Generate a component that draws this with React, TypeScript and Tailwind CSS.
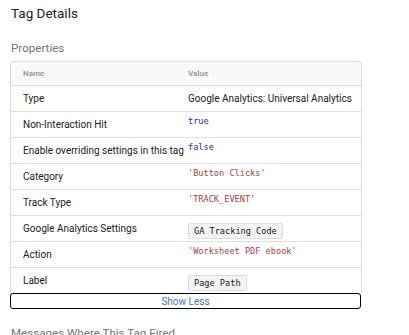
import React from "react";

const mono = "font-['DejaVu_Sans_Mono','Liberation_Mono',monospace]";

type Row = { name: string; kind: "text" | "bool" | "str" | "chip"; value: string };

const rows: Row[] = [
  { name: "Type", kind: "text", value: "Google Analytics: Universal Analytics" },
  { name: "Non-Interaction Hit", kind: "bool", value: "true" },
  { name: "Enable overriding settings in this tag", kind: "bool", value: "false" },
  { name: "Category", kind: "str", value: "'Button Clicks'" },
  { name: "Track Type", kind: "str", value: "'TRACK_EVENT'" },
  { name: "Google Analytics Settings", kind: "chip", value: "GA Tracking Code" },
  { name: "Action", kind: "str", value: "'Worksheet PDF ebook'" },
  { name: "Label", kind: "chip", value: "Page Path" },
];

function Value({ row }: { row: Row }) {
  if (row.kind === "text")
    return <div className="self-center text-[10px] text-[#212121]">{row.value}</div>;
  if (row.kind === "bool")
    return <div className={`${mono} pt-[3px] text-[8.6px] leading-[13px] text-[#2d2d9c]`}>{row.value}</div>;
  if (row.kind === "str")
    return <div className={`${mono} pt-[3px] text-[8.6px] leading-[13px] whitespace-pre text-[#a8403c]`}>{row.value}</div>;
  return (
    <div className="self-center">
      <span className={`${mono} inline-block rounded-[2px] border border-[#dadce0] bg-[#f1f3f4] px-[5px] text-[8.6px] leading-[14px] text-[#212121]`}>
        {row.value}
      </span>
    </div>
  );
}

export default function App() {
  return (
    <div className="w-[409px] h-[335px] overflow-hidden bg-white font-['Roboto','Noto_Sans',sans-serif]">
      <div className="pl-[11px] pt-[3px] text-[13.5px] leading-[20px] text-[#212121]">Tag Details</div>
      <div className="pl-[11px] pt-[17px] text-[11.6px] leading-[16px] text-[#757575]">Properties</div>
      <div className="ml-[10px] mt-[5px] w-[352px]">
        <div className="overflow-hidden rounded-t-[4px] border-x border-t border-[#dadce0]">
          <div className="flex h-[23px] items-center bg-[#f8f9fa] text-[8px] font-bold text-[#9e9e9e]">
            <div className="w-[177px] pl-[12px]">Name</div>
            <div>Value</div>
          </div>
          {rows.map((r) => (
            <div key={r.name} className="flex h-[26px] border-t border-[#e0e0e0]">
              <div className="w-[177px] shrink-0 self-center whitespace-nowrap pl-[12px] text-[10px] text-[#212121]">
                {r.name}
              </div>
              <Value row={r} />
            </div>
          ))}
        </div>
        <button className="flex h-[16px] w-[351px] items-center justify-center rounded-[3px] border-[1.5px] border-black bg-white text-[10px] text-[#4a6fe0]">
          Show Less
        </button>
      </div>
      <div className="pl-[11px] pt-[16px] text-[11.6px] leading-[16px] text-[#757575]">Messages Where This Tag Fired</div>
    </div>
  );
}
